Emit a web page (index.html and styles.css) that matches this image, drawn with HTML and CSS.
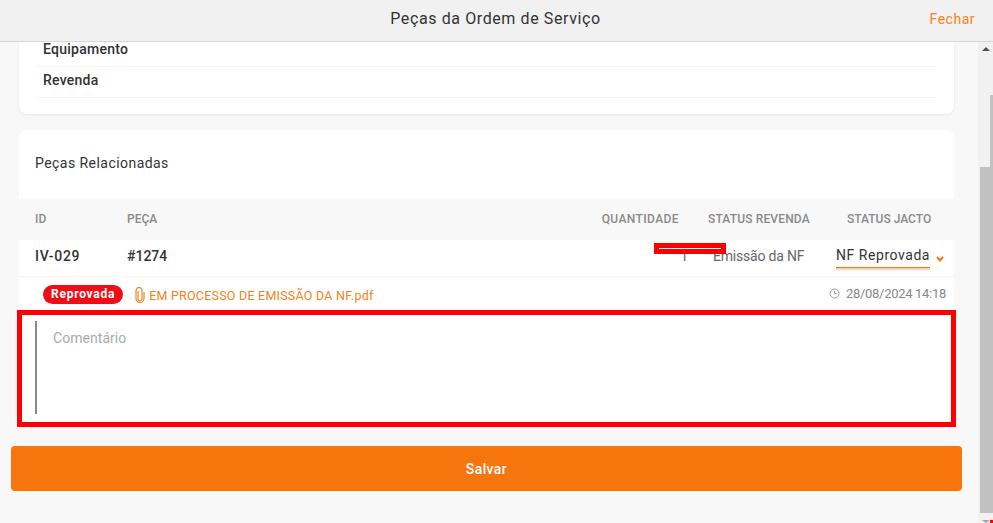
FILE: index.html
```html
<!DOCTYPE html>
<html lang="pt-BR">
<head>
<meta charset="utf-8">
<title>Peças da Ordem de Serviço</title>
<link rel="stylesheet" href="styles.css">
</head>
<body>
<header class="topbar">
  <h1 class="topbar-title">Peças da Ordem de Serviço</h1>
  <a class="topbar-close">Fechar</a>
</header>
<div class="viewport">
  <main class="content">
    <section class="card card-info">
      <div class="info-row">Equipamento</div>
      <div class="info-row">Revenda</div>
    </section>
    <section class="card card-parts">
      <h2 class="parts-title">Peças Relacionadas</h2>
      <div class="grid grid-head">
        <span>ID</span>
        <span>PEÇA</span>
        <span class="col-qty">QUANTIDADE</span>
        <span class="col-rev">STATUS REVENDA</span>
        <span class="col-jacto">STATUS JACTO</span>
      </div>
      <div class="grid grid-row">
        <span class="cell-id">IV-029</span>
        <span class="cell-code">#1274</span>
        <span class="cell-qty">1</span>
        <span class="cell-rev">Emissão da NF</span>
        <span class="cell-select">
          <span class="select-value">NF Reprovada</span>
          <svg class="select-caret" width="8" height="6" viewBox="0 0 8 6"><path d="M1 1 4 4.500 7 1" fill="none" stroke="#f57a10" stroke-width="2"/></svg>
        </span>
        <div class="redact"></div>
      </div>
      <div class="attach-row">
        <span class="badge">Reprovada</span>
        <svg class="clip" width="10" height="16" viewBox="0 0 10 16"><path d="M3 4v8a2 2 0 0 0 4 0V3.500a3 3 0 0 0-6 0V11.500a4 4 0 0 0 8 0V5" fill="none" stroke="#f58220" stroke-width="1.200"/></svg>
        <a class="attach-link">EM PROCESSO DE EMISSÃO DA NF.pdf</a>
        <span class="stamp">
          <svg width="11" height="11" viewBox="0 0 11 11"><circle cx="5.500" cy="5.500" r="4.500" fill="none" stroke="#999" stroke-width="1"/><path d="M5.500 2.800v2.900h2.200" fill="none" stroke="#999" stroke-width="1"/></svg>
          28/08/2024 14:18
        </span>
      </div>
      <div class="comment-box">
        <div class="comment-input">Comentário</div>
      </div>
    </section>
    <button class="save">Salvar</button>
  </main>
  <aside class="scrollbar">
    <i class="arrow arrow-up"></i>
    <div class="scroll-track">
      <div class="scroll-edge"></div>
      <div class="scroll-thumb"></div>
    </div>
    <i class="arrow arrow-down"></i>
    <i class="scroll-dot"></i>
  </aside>
</div>
</body>
</html>
```
FILE: styles.css
```css
* { box-sizing: border-box; }
html, body { margin: 0; height: 100%; }
body {
  width: 993px;
  height: 523px;
  overflow: hidden;
  background: #f8f8f8;
  color: #333;
  font-family: Roboto, "Liberation Sans", sans-serif;
  display: flex;
  flex-direction: column;
}
.topbar {
  height: 42px;
  flex: none;
  background: #f1f1f1;
  border-bottom: 1px solid #d6d6d6;
  display: flex;
  align-items: center;
  justify-content: center;
  position: relative;
  z-index: 2;
  padding: 0 2px 4px 0;
}
.topbar-title {
  margin: 0;
  font-size: 16px;
  font-weight: 400;
  letter-spacing: 0.6px;
  color: #333;
}
.topbar-close {
  position: absolute;
  right: 18px;
  top: 11px;
  font-size: 14px;
  letter-spacing: 0.5px;
  color: #f58220;
}
.viewport { flex: 1; display: flex; min-height: 0; }
.content {
  width: 978px;
  flex: none;
  padding: 0 16px 0 11px;
  display: flex;
  flex-direction: column;
}
.card {
  background: #fff;
  margin: 0 8px;
  width: 935px;
  border-radius: 0 0 8px 8px;
  box-shadow: 0 1px 3px rgba(0,0,0,.07);
}
.card-info {
  height: 72px;
  padding: 0 17px 0 16px;
}
.info-row {
  height: 31px;
  padding-left: 8px;
  border-bottom: 1px solid #f3f3f3;
  font-size: 14px;
  font-weight: 500;
  letter-spacing: 0.25px;
  line-height: 26px;
}
.info-row:first-child { height: 25px; line-height: 15px; }
.card-parts {
  margin-top: 16px;
  height: 297px;
  border-radius: 8px 8px 0 0;
  box-shadow: none;
}
.parts-title {
  margin: 0;
  height: 69px;
  padding: 25px 0 0 16px;
  font-size: 14px;
  font-weight: 400;
  letter-spacing: 0.45px;
  line-height: 16px;
}
.grid {
  display: grid;
  grid-template-columns: 92px 1fr 120px 132px 144px;
  align-items: center;
  padding-left: 16px;
  position: relative;
}
.grid-head {
  height: 41px;
  padding-bottom: 2px;
  background: #f8f8f8;
  font-size: 12px;
  font-weight: 500;
  color: #8a8a8a;
}
.grid-row {
  height: 37px;
  padding-bottom: 4px;
  border-bottom: 1px solid #f3f3f3;
  font-size: 14px;
}
.col-qty { text-align: right; letter-spacing: 0.4px; margin-right: -1px; }
.col-rev { padding-left: 30px; white-space: nowrap; letter-spacing: 0.15px; }
.col-jacto { padding-left: 38px; white-space: nowrap; margin-left: -1px; }
.cell-id { font-weight: 500; letter-spacing: 0.7px; }
.cell-code { font-weight: 500; letter-spacing: 0; }
.cell-qty { color: #666; text-align: right; margin-right: -10px; }
.cell-rev { color: #666; padding-left: 35px; white-space: nowrap; letter-spacing: -0.2px; }
.cell-select {
  padding-left: 26px;
  display: flex;
  align-items: center;
  gap: 6px;
  white-space: nowrap;
  letter-spacing: 0.55px;
}
.select-value {
  height: 24px;
  line-height: 22px;
  border-bottom: 1px solid #e8751a;
  box-shadow: 0 2px 0 #fbd5b5;
}
.select-caret { margin-top: 6px; }
.redact {
  position: absolute;
  left: 635px;
  top: 3px;
  width: 72px;
  height: 11px;
  border: 5px solid #f00;
  background: #fff;
}
.attach-row {
  height: 33px;
  display: flex;
  align-items: center;
  padding: 2px 8px 0 24px;
}
.badge {
  background: #ee0f16;
  color: #fff;
  font-size: 12px;
  font-weight: 700;
  letter-spacing: 0.75px;
  height: 19px;
  line-height: 18px;
  padding: 0 8px;
  border-radius: 10px;
}
.clip { margin-left: 12px; }
.attach-link {
  margin: 2px 0 0 4px;
  font-size: 12.500px;
  color: #f58220;
  letter-spacing: 0.23px;
}
.stamp {
  margin-left: auto;
  margin-top: -2px;
  font-size: 13px;
  letter-spacing: -0.3px;
  color: #888;
  display: flex;
  align-items: center;
  gap: 6px;
}
.comment-box {
  margin: 0 -2px;
  height: 117px;
  border: 5px solid #f00;
  background: #fff;
  padding: 6px 0 13px 13px;
  position: relative;
}
.comment-input {
  height: 93px;
  border-left: 2px solid #888;
  padding: 9px 0 0 16px;
  font-size: 14px;
  letter-spacing: 0.05px;
  color: #aaa;
}
.save {
  margin-top: 19px;
  width: 951px;
  height: 45px;
  border: 0;
  border-radius: 4px;
  background: #f6760d;
  color: #fff;
  font: 500 14px Roboto, "Liberation Sans", sans-serif;
  letter-spacing: 0.4px;
  flex: none;
}
.scrollbar {
  width: 15px;
  flex: none;
  background: #f1f1f1;
  position: relative;
  display: flex;
  flex-direction: column;
}
.scroll-track { flex: 1; position: relative; }
.scroll-edge {
  position: absolute;
  left: 12px;
  right: 0;
  top: 53px;
  height: 90px;
  background: #c1c1c1;
}
.scroll-thumb {
  position: absolute;
  left: 2px;
  width: 13px;
  top: 125px;
  height: 346px;
  background: #c1c1c1;
}
.arrow {
  position: absolute;
  left: 4px;
  width: 0;
  height: 0;
  border-left: 4px solid transparent;
  border-right: 4px solid transparent;
}
.arrow-up { top: 5px; border-bottom: 4px solid #505050; }
.arrow-down { bottom: 0; border-top: 3px solid #a3a3a3; }
.scroll-dot {
  position: absolute;
  right: 0;
  bottom: 0;
  width: 3px;
  height: 3px;
  background: #f00;
}
```
